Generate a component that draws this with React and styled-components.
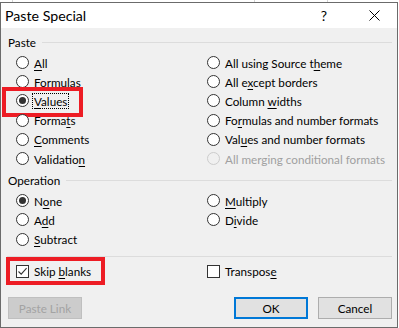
import styled, { createGlobalStyle, css } from "styled-components";

const GlobalStyle = createGlobalStyle`
  html, body {
    margin: 0;
    padding: 0;
    background: #ffffff;
  }
  body {
    font-family: Lato, "Liberation Sans", sans-serif;
    font-size: 11.7px;
    color: #000;
  }
`;

const pasteLeft = [
  { label: "All", key: 0 },
  { label: "Formulas", key: -1 },
  { label: "Values", key: 0, checked: true, focus: true, highlight: "-7px -15px -9px -14px" },
  { label: "Formats", key: 5 },
  { label: "Comments", key: 0 },
  { label: "Validation", key: 9 },
];

const pasteRight = [
  { label: "All using Source theme", key: 18 },
  { label: "All except borders", key: 5 },
  { label: "Column widths", key: 7 },
  { label: "Formulas and number formats", key: 2 },
  { label: "Values and number formats", key: 3 },
  { label: "All merging conditional formats", key: -1, disabled: true },
];

const opLeft = [
  { label: "None", key: 1, checked: true },
  { label: "Add", key: 1 },
  { label: "Subtract", key: 0 },
];

const opRight = [
  { label: "Multiply", key: 0 },
  { label: "Divide", key: 1 },
];

const Page = styled.div`
  width: 399px;
  height: 328px;
  overflow: hidden;
`;

const SheetStrip = styled.div`
  height: 2px;
  background:
    linear-gradient(#d4d4d4, #d4d4d4) 12px 0 / 1px 100% no-repeat,
    linear-gradient(#d4d4d4, #d4d4d4) 254px 0 / 1px 100% no-repeat,
    linear-gradient(#d4d4d4, #d4d4d4) 327px 0 / 1px 100% no-repeat,
    #fff;
`;

const Dialog = styled.div`
  width: 396px;
  border: 1px solid #6b6b6b;
  background: #f0f0f0;
`;

const TitleBar = styled.div`
  height: 25px;
  background: #fff;
  display: flex;
  align-items: center;
  justify-content: space-between;
  padding-left: 4px;
`;

const Title = styled.span`
  font-size: 14.2px;
`;

const TitleButtons = styled.div`
  display: flex;
  align-items: center;
  height: 100%;
`;

const TitleButton = styled.span`
  width: 46px;
  height: 100%;
  display: flex;
  align-items: center;
  justify-content: center;
  font-size: 14px;
  padding-left: ${(p) => p.$shift || 0}px;
`;

const Body = styled.div`
  padding: 8px 5px 8px 6px;
`;

const GroupHeader = styled.div`
  display: flex;
  align-items: center;
  gap: 6px;
  height: 12px;
  padding-left: 1px;
  margin-top: ${(p) => p.$top || 0}px;
  margin-bottom: 5px;
  &::after {
    content: "";
    flex: 1;
    height: 1px;
    background: #dcdcdc;
  }
`;

const OptionGrid = styled.div`
  display: grid;
  grid-template-columns: 191px 1fr;
  justify-items: start;
  padding-left: 9px;
`;

const Column = styled.div`
  display: flex;
  flex-direction: column;
`;

const Row = styled.div`
  height: 19.2px;
  display: flex;
  align-items: center;
`;

const Option = styled.span`
  position: relative;
  display: inline-flex;
  align-items: center;
  gap: 4px;
  white-space: nowrap;
  color: ${(p) => (p.$disabled ? "#a0a0a0" : "#000")};
  ${(p) =>
    p.$highlight &&
    css`
      &::after {
        content: "";
        position: absolute;
        inset: ${p.$highlight};
        border: 4px solid #ed1c24;
        pointer-events: none;
      }
    `}
`;

const Radio = styled.span`
  width: 11px;
  height: 11px;
  border-radius: 50%;
  border: 1px solid ${(p) => (p.$disabled ? "#cccccc" : "#333")};
  background: ${(p) => (p.$disabled ? "#f0f0f0" : "#fff")};
  display: flex;
  align-items: center;
  justify-content: center;
  flex-shrink: 0;
  &::before {
    content: "";
    width: 7px;
    height: 7px;
    border-radius: 50%;
    background: #333;
    display: ${(p) => (p.$checked ? "block" : "none")};
  }
`;

const Box = styled.span`
  width: 11px;
  height: 11px;
  border: 1px solid #333;
  background: #fff;
  display: flex;
  align-items: center;
  justify-content: center;
  flex-shrink: 0;
`;

const Label = styled.span`
  padding: 0 1px;
  line-height: 14px;
  outline: ${(p) => (p.$focus ? "1px dotted #000" : "none")};
`;

const Key = styled.span`
  text-decoration: underline;
  text-underline-offset: 2px;
`;

const Divider = styled.div`
  height: 1px;
  background: #dcdcdc;
  margin-top: 7px;
`;

const CheckGrid = styled(OptionGrid)`
  height: 27px;
  align-items: center;
  margin-top: 1px;
`;

const ButtonRow = styled.div`
  display: flex;
  align-items: center;
  margin-top: 12px;
  padding-left: 1px;
`;

const Button = styled.button`
  font: inherit;
  width: 74px;
  height: 22px;
  padding: 0;
  border: 1px solid #adadad;
  background: #e1e1e1;
  color: #000;
  ${(p) =>
    p.$primary &&
    css`
      border: 2px solid #0078d7;
    `}
  ${(p) =>
    p.$disabled &&
    css`
      background: #cccccc;
      border-color: #bfbfbf;
      color: #a3a3a3;
    `}
`;

const Spacer = styled.div`
  flex: 1;
`;

const ButtonGap = styled.div`
  width: 10px;
`;

function Text({ label, index }) {
  if (index < 0) return label;
  return (
    <>
      {label.slice(0, index)}
      <Key>{label[index]}</Key>
      {label.slice(index + 1)}
    </>
  );
}

function RadioOption({ item }) {
  return (
    <Row>
      <Option $disabled={item.disabled} $highlight={item.highlight}>
        <Radio $checked={item.checked} $disabled={item.disabled} />
        <Label $focus={item.focus}>
          <Text label={item.label} index={item.key} />
        </Label>
      </Option>
    </Row>
  );
}

function CheckOption({ label, index, checked, highlight }) {
  return (
    <Option $highlight={highlight}>
      <Box>
        {checked && (
          <svg width="11" height="11" viewBox="0 0 11 11">
            <path d="M1.5 5.5 L4.2 8.2 L9.6 2.2" fill="none" stroke="#333" strokeWidth="1.1" />
          </svg>
        )}
      </Box>
      <Label>
        <Text label={label} index={index} />
      </Label>
    </Option>
  );
}

export default function App() {
  return (
    <Page>
      <GlobalStyle />
      <SheetStrip />
      <Dialog>
        <TitleBar>
          <Title>Paste Special</Title>
          <TitleButtons>
            <TitleButton>?</TitleButton>
            <TitleButton $shift={4}>
              <svg width="11" height="11" viewBox="0 0 11 11">
                <path d="M0.5 0.5 L10.5 10.5 M10.5 0.5 L0.5 10.5" stroke="#000" strokeWidth="1" />
              </svg>
            </TitleButton>
          </TitleButtons>
        </TitleBar>
        <Body>
          <GroupHeader>Paste</GroupHeader>
          <OptionGrid>
            <Column>
              {pasteLeft.map((item) => (
                <RadioOption key={item.label} item={item} />
              ))}
            </Column>
            <Column>
              {pasteRight.map((item) => (
                <RadioOption key={item.label} item={item} />
              ))}
            </Column>
          </OptionGrid>
          <GroupHeader $top={6}>Operation</GroupHeader>
          <OptionGrid>
            <Column>
              {opLeft.map((item) => (
                <RadioOption key={item.label} item={item} />
              ))}
            </Column>
            <Column>
              {opRight.map((item) => (
                <RadioOption key={item.label} item={item} />
              ))}
            </Column>
          </OptionGrid>
          <Divider />
          <CheckGrid>
            <CheckOption label="Skip blanks" index={5} checked highlight="-7px -13px -7px -10px" />
            <CheckOption label="Transpose" index={8} />
          </CheckGrid>
          <ButtonRow>
            <Button $disabled>Paste Link</Button>
            <Spacer />
            <Button $primary>OK</Button>
            <ButtonGap />
            <Button>Cancel</Button>
          </ButtonRow>
        </Body>
      </Dialog>
    </Page>
  );
}
